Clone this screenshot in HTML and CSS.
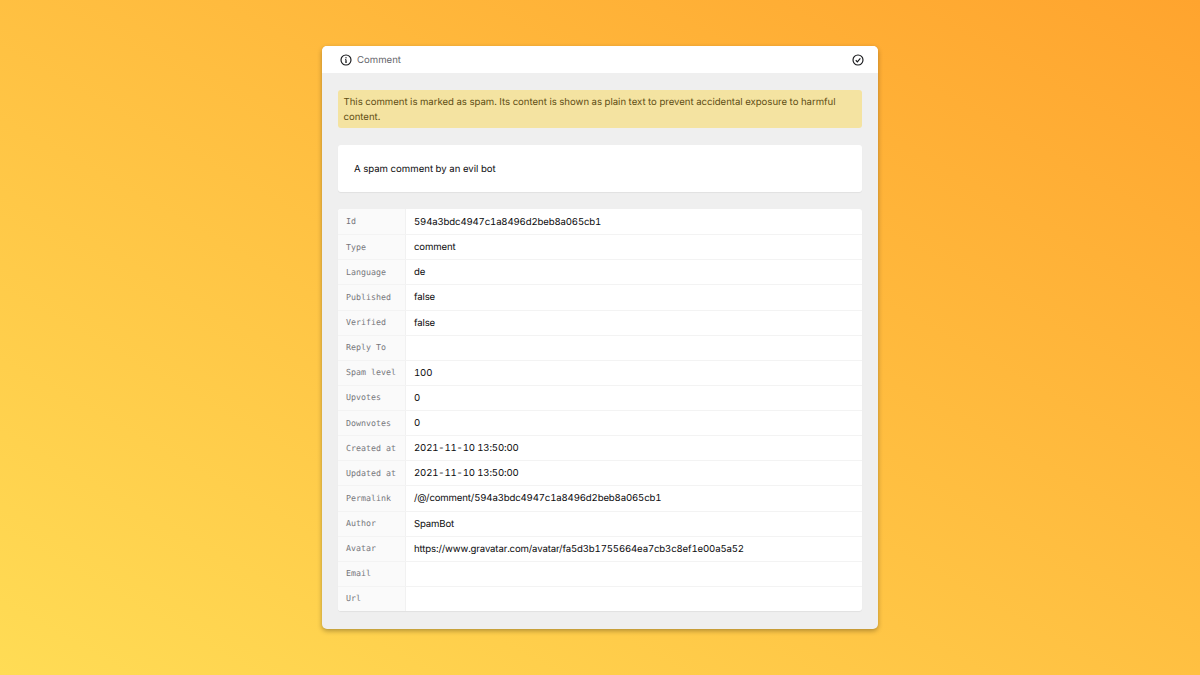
FILE: index.html
```html
<!DOCTYPE html>
<html lang="en">
<head>
<meta charset="utf-8">
<title>Comment</title>
<link rel="stylesheet" href="styles.css">
</head>
<body>
<main class="dialog">
  <header class="dialog-header">
    <div class="title">
      <svg class="icon" viewBox="0 0 24 24" aria-hidden="true"><circle cx="12" cy="12" r="10"/><path d="M12 16.5v-5.5M10.4 11H12M10.2 16.5h3.6"/><circle class="dot" cx="12" cy="7.5" r="1.3"/></svg>
      <span class="title-text">Comment</span>
    </div>
    <svg class="icon" viewBox="0 0 24 24" aria-hidden="true"><circle cx="12" cy="12" r="10"/><path d="M7.5 12.5l3.2 3.2 6-7"/></svg>
  </header>
  <div class="dialog-body">
    <p class="alert">This comment is marked as spam. Its content is shown as plain text to prevent accidental exposure to harmful content.</p>
    <div class="card">A spam comment by an evil bot</div>
    <dl class="details">
      <div class="row"><dt>Id</dt><dd>594a3bdc4947c1a8496d2beb8a065cb1</dd></div>
      <div class="row"><dt>Type</dt><dd>comment</dd></div>
      <div class="row"><dt>Language</dt><dd>de</dd></div>
      <div class="row"><dt>Published</dt><dd>false</dd></div>
      <div class="row"><dt>Verified</dt><dd>false</dd></div>
      <div class="row"><dt>Reply To</dt><dd></dd></div>
      <div class="row"><dt>Spam level</dt><dd>100</dd></div>
      <div class="row"><dt>Upvotes</dt><dd>0</dd></div>
      <div class="row"><dt>Downvotes</dt><dd>0</dd></div>
      <div class="row"><dt>Created at</dt><dd>2021-11-10 13:50:00</dd></div>
      <div class="row"><dt>Updated at</dt><dd>2021-11-10 13:50:00</dd></div>
      <div class="row"><dt>Permalink</dt><dd>/@/comment/594a3bdc4947c1a8496d2beb8a065cb1</dd></div>
      <div class="row"><dt>Author</dt><dd>SpamBot</dd></div>
      <div class="row"><dt>Avatar</dt><dd>https://www.gravatar.com/avatar/fa5d3b1755664ea7cb3c8ef1e00a5a52</dd></div>
      <div class="row"><dt>Email</dt><dd></dd></div>
      <div class="row"><dt>Url</dt><dd></dd></div>
    </dl>
  </div>
</main>
</body>
</html>
```
FILE: styles.css
```css
* { box-sizing: border-box; }
html, body { height: 100%; }
body {
  margin: 0;
  height: 675px;
  overflow: hidden;
  padding-top: 46px;
  display: flex;
  justify-content: center;
  align-items: flex-start;
  background: linear-gradient(to top right, #ffdc55, #ffa42e);
  font-family: Inter, "Liberation Sans", sans-serif;
  font-size: 9.6px;
  font-variant-numeric: tabular-nums;
  text-rendering: geometricPrecision;
  color: #0c0c0e;
}
.dialog {
  width: 556px;
  height: 583px;
  border-radius: 5px;
  overflow: hidden;
  background: #efefef;
  box-shadow: 0 2px 5px rgba(0,0,0,.3);
}
.dialog-header {
  height: 27px;
  background: #fff;
  padding: 0 14px 0 17.5px;
  display: flex;
  align-items: center;
  justify-content: space-between;
}
.title { display: flex; align-items: center; gap: 5.5px; color: #66666c; }
.title-text { padding-top: 2px; }
.icon { width: 12px; height: 12px; fill: none; stroke: #16171a; stroke-width: 2.3; display: block; }
.icon .dot { fill: #16171a; stroke: none; }
.dialog-body { padding: 17px 16px; }
.alert {
  margin: 0 0 17px;
  height: 38px;
  padding: 5px 5.5px;
  font-size: 9.6px;
  letter-spacing: -0.02px;
  line-height: 15px;
  border-radius: 3px;
  background: #f4e3a1;
  color: #5f4e14;
}
.card {
  height: 47px;
  margin-bottom: 17px;
  padding: 1px 17px 0 16px;
  display: flex;
  align-items: center;
  background: #fff;
  border-radius: 3px;
  box-shadow: 0 1px 1px rgba(0,0,0,.06);
}
.details {
  margin: 0;
  height: 402px;
  display: grid;
  grid-template-rows: repeat(16, 1fr);
  background: #fff;
  border-radius: 3px;
  overflow: hidden;
  box-shadow: 0 1px 1px rgba(0,0,0,.06);
}
.row {
  display: grid;
  grid-template-columns: 68px 1fr;
  align-items: stretch;
  border-top: 1px solid #f3f3f3;
}
.row:first-child { border-top: 0; }
dt, dd { margin: 0; display: flex; align-items: center; }
dt {
  padding: 0 0 1px 8px;
  background: #fafafa;
  border-right: 1px solid #f1f1f1;
  font-family: "DejaVu Sans Mono", monospace;
  font-size: 8.3px;
  color: #77777c;
}
dd { padding: 1px 0 0 8px; letter-spacing: -0.14px; }
```
